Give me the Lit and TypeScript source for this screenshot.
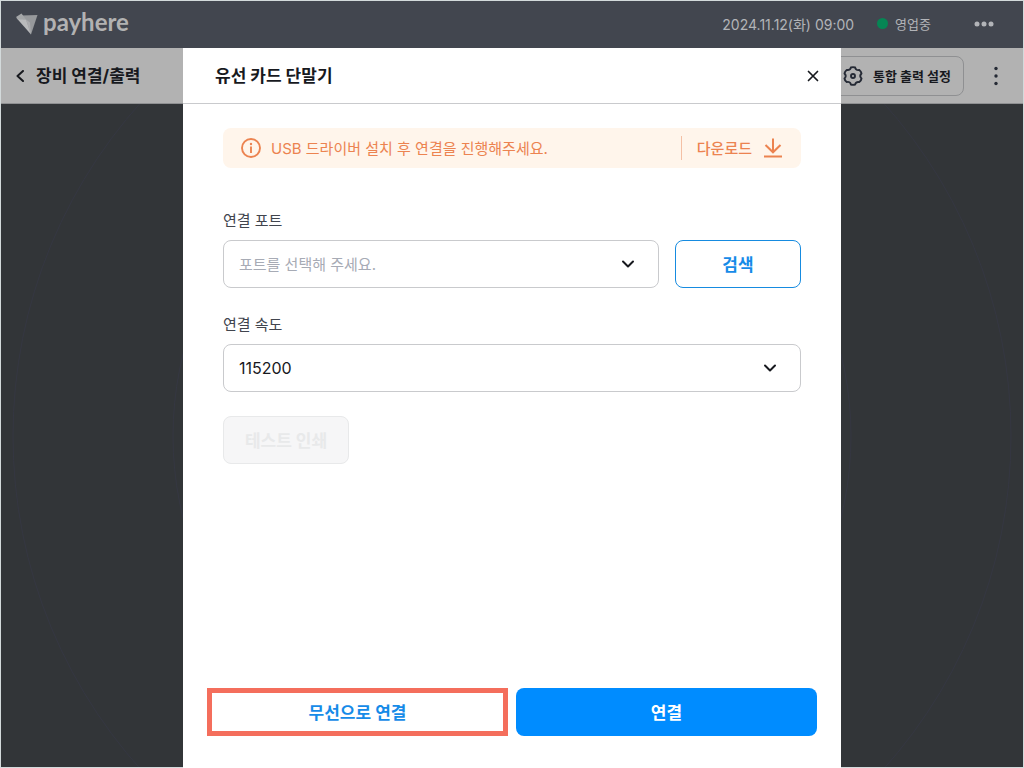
import { LitElement, html, css, svg } from "lit";
import { customElement, state } from "lit/decorators.js";

const chevronDown = svg`<path d="M2 2.5 L7 7.5 L12 2.5" fill="none" stroke="#17191e" stroke-width="2" stroke-linecap="round" stroke-linejoin="round"/>`;

@customElement("select-box")
class SelectBox extends LitElement {
  static properties = {
    label: {},
    placeholder: {},
    options: { attribute: false },
  };
  declare label: string;
  declare placeholder: string;
  declare options: string[];

  constructor() {
    super();
    this.label = "";
    this.placeholder = "";
    this.options = [];
  }

  static styles = css`
    :host {
      display: block;
      flex: 1;
      min-width: 0;
    }
    .label {
      display: block;
      font-size: 15px;
      line-height: 26px;
      margin-bottom: 6px;
      color: #41454e;
    }
    .field {
      display: grid;
      align-items: center;
    }
    .control {
      grid-area: 1 / 1;
      appearance: none;
      box-sizing: border-box;
      width: 100%;
      height: 48px;
      padding: 0 48px 0 15px;
      border: 1px solid #c9cacd;
      border-radius: 8px;
      background: #fff;
      color: #17191e;
      font-family: inherit;
      font-size: 16px;
    }
    .control.empty {
      color: #a7abb5;
      font-size: 15px;
    }
    .chevron {
      grid-area: 1 / 1;
      justify-self: end;
      margin-right: 24px;
      pointer-events: none;
    }
  `;

  render() {
    return html`
      <label class="label" for="control">${this.label}</label>
      <div class="field">
        <select id="control" class="control ${this.placeholder ? "empty" : ""}">
          ${this.placeholder ? html`<option value="">${this.placeholder}</option>` : ""}
          ${this.options.map((o) => html`<option>${o}</option>`)}
        </select>
        <svg class="chevron" width="14" height="10" viewBox="0 0 14 10" aria-hidden="true">${chevronDown}</svg>
      </div>
    `;
  }
}

@customElement("app-root")
class AppRoot extends LitElement {
  @state() speeds = ["115200", "57600", "38400", "19200", "9600"];

  static styles = css`
    :host {
      display: block;
      font-family: "Inter", "Noto Sans CJK KR", sans-serif;
      color: #17191e;
    }
    button {
      font-family: inherit;
      margin: 0;
      padding: 0;
      border: 0;
      background: none;
      color: inherit;
      cursor: pointer;
    }
    svg {
      display: block;
    }
    .page {
      box-sizing: border-box;
      min-height: 100vh;
      display: flex;
      flex-direction: column;
      border: 1px solid #d3dadb;
      background: #323538;
    }
    .topbar {
      box-sizing: border-box;
      display: flex;
      align-items: center;
      height: 47px;
      padding: 0 29px 2px 15px;
      background: #42464f;
      color: #b2b4b8;
      font-size: 14px;
    }
    .brand {
      display: flex;
      align-items: center;
      gap: 5px;
      margin-right: auto;
    }
    .wordmark {
      font-family: "Lato", sans-serif;
      font-size: 24px;
      font-weight: 700;
      line-height: 40px;
      padding-bottom: 4px;
      color: #b2b2b2;
    }
    .status {
      display: flex;
      align-items: center;
      gap: 7px;
      margin: 0 43px 0 23px;
      font-size: 13px;
    }
    .dot {
      width: 11px;
      height: 11px;
      border-radius: 50%;
      background: #068554;
    }
    .subbar {
      box-sizing: border-box;
      display: flex;
      align-items: center;
      height: 56px;
      padding: 0 25px 0 15px;
      border-bottom: 1px solid #8f9092;
      background: #b2b2b2;
    }
    .back {
      display: flex;
      align-items: center;
      gap: 12px;
      margin-right: auto;
    }
    .heading {
      margin: 0;
      font-size: 17px;
      line-height: 24px;
      font-weight: 700;
    }
    .settings {
      box-sizing: border-box;
      display: flex;
      align-items: center;
      gap: 10px;
      height: 40px;
      padding: 0 12px 0 15px;
      margin-right: 30px;
      border: 1px solid #8f9092;
      border-radius: 8px;
      font-size: 13px;
      font-weight: 700;
    }
    .stage {
      flex: 1;
      display: grid;
      place-items: center;
      overflow: hidden;
    }
    .rings {
      width: 1000px;
      height: 1000px;
      margin: -200px 0;
    }
    .overlay {
      position: fixed;
      inset: 48px 0 0 0;
      display: flex;
      justify-content: center;
    }
    .dialog {
      box-sizing: border-box;
      width: 658px;
      max-width: 100%;
      display: flex;
      flex-direction: column;
      background: #fff;
    }
    .dialog-head {
      box-sizing: border-box;
      display: flex;
      align-items: center;
      justify-content: space-between;
      height: 56px;
      padding: 0 22px 0 32px;
      border-bottom: 1px solid #c9cacd;
    }
    .dialog-body {
      flex: 1;
      padding: 24px 40px;
    }
    .notice {
      display: flex;
      align-items: center;
      height: 40px;
      margin-bottom: 40px;
      padding: 0 19px 0 18px;
      border-radius: 8px;
      background: #fff5eb;
      color: #ec8350;
      font-size: 15px;
    }
    .notice-text {
      flex: 1;
      margin-left: 10px;
      padding-bottom: 2px;
    }
    .download {
      display: flex;
      align-items: center;
      gap: 12px;
      height: 24px;
      padding-left: 15px;
      border-left: 1px solid #f4c0a5;
      color: inherit;
      font-weight: 500;
      text-decoration: none;
    }
    .download-text {
      padding-bottom: 2px;
    }
    .row {
      display: flex;
      align-items: flex-end;
      gap: 16px;
      margin-bottom: 24px;
    }
    .btn {
      box-sizing: border-box;
      height: 48px;
      padding-bottom: 2px;
      border-radius: 8px;
      font-size: 17px;
      font-weight: 700;
    }
    .search {
      width: 126px;
      border: 1px solid #168be0;
      color: #168be8;
    }
    .test {
      width: 126px;
      border: 1px solid #e8e9ea;
      background: #f6f6f7;
      color: #e8e9ea;
      cursor: default;
    }
    .actions {
      display: grid;
      grid-template-columns: 1fr 1fr;
      gap: 8px;
      padding: 0 24px 32px;
    }
    .wireless {
      border: 5px solid #f46e5c;
      border-radius: 0;
      color: #168be8;
    }
    .connect {
      background: #008cff;
      color: #fff;
    }
  `;

  render() {
    return html`
      <div class="page">
        <header class="topbar">
          <div class="brand">
            <svg width="22" height="22" viewBox="0 0 22 22" aria-hidden="true">
              <path d="M5.500 2.500 L21.500 2 L15 21.500 Z" fill="#97999c" />
              <path d="M0.500 5 L10 6.500 L15 21.500 Z" fill="#b9babc" />
              <path d="M10 6.500 L14 9.500 L15 21.500 Z" fill="#aaabae" />
              <path d="M0 4 L5.500 0.500 L10 6.500 L2 6.500 Z" fill="#a4a6a8" />
            </svg>
            <span class="wordmark">payhere</span>
          </div>
          <time>2024.11.12(화) 09:00</time>
          <div class="status"><span class="dot"></span>영업중</div>
          <button aria-label="더보기">
            <svg width="20" height="6" viewBox="0 0 20 6" fill="#b2b4b8">
              <circle cx="3" cy="3" r="2.500" /><circle cx="10" cy="3" r="2.500" /><circle cx="17" cy="3" r="2.500" />
            </svg>
          </button>
        </header>

        <div class="subbar">
          <div class="back">
            <button aria-label="뒤로">
              <svg width="8" height="12" viewBox="0 0 8 12"><path d="M7 1 L1.500 6 L7 11" fill="none" stroke="#17191e" stroke-width="2" stroke-linecap="round" stroke-linejoin="round" /></svg>
            </button>
            <h1 class="heading">장비 연결/출력</h1>
          </div>
          <button class="settings">
            <svg width="20" height="20" viewBox="0 0 20 20" fill="none" stroke="#252a35" stroke-width="1.900" stroke-linejoin="round" aria-hidden="true">
              <path d="M7.900 1.500 Q10 0.700 12.100 1.500 Q13 4.800 16.300 3.900 Q18.200 5.300 18.500 7.500 Q16 10 18.500 12.500 Q18.200 14.700 16.300 16.100 Q13 15.200 12.100 18.500 Q10 19.300 7.900 18.500 Q7 15.200 3.700 16.100 Q1.800 14.700 1.500 12.500 Q4 10 1.500 7.500 Q1.800 5.300 3.700 3.900 Q7 4.800 7.900 1.500 Z" />
              <circle cx="10" cy="10" r="2" />
            </svg>
            통합 출력 설정
          </button>
          <button aria-label="메뉴">
            <svg width="4" height="20" viewBox="0 0 4 20" fill="#252a35">
              <circle cx="2" cy="2.500" r="1.700" /><circle cx="2" cy="10" r="1.700" /><circle cx="2" cy="17.500" r="1.700" />
            </svg>
          </button>
        </div>

        <main class="stage">
          <svg class="rings" viewBox="0 0 1000 1000" fill="none" stroke="#353742" aria-hidden="true">
            <circle cx="500" cy="500" r="499" /><circle cx="500" cy="500" r="339" />
          </svg>
        </main>
      </div>

      <div class="overlay">
        <section class="dialog" role="dialog" aria-labelledby="dialog-title">
          <div class="dialog-head">
            <h2 class="heading" id="dialog-title">유선 카드 단말기</h2>
            <button aria-label="닫기">
              <svg width="12" height="12" viewBox="0 0 12 12"><path d="M1.500 1.500 L10.500 10.500 M10.500 1.500 L1.500 10.500" stroke="#17191e" stroke-width="1.700" stroke-linecap="round" /></svg>
            </button>
          </div>
          <div class="dialog-body">
            <div class="notice">
              <svg width="20" height="20" viewBox="0 0 20 20" aria-hidden="true">
                <circle cx="10" cy="10" r="9" fill="none" stroke="#ec8350" stroke-width="1.900" />
                <circle cx="10" cy="6" r="1.200" fill="#ec8350" />
                <path d="M10 8.500 V15" stroke="#ec8350" stroke-width="1.900" />
              </svg>
              <span class="notice-text">USB 드라이버 설치 후 연결을 진행해주세요.</span>
              <a class="download" href="#">
                <span class="download-text">다운로드</span>
                <svg width="18" height="20" viewBox="0 0 18 20" fill="none" stroke="#ec8350" stroke-width="2" aria-hidden="true">
                  <path d="M9 0.500 V14 M1.500 7 L9 14.300 L16.500 7 M0 18.500 H18" />
                </svg>
              </a>
            </div>
            <div class="row">
              <select-box .label=${"연결 포트"} .placeholder=${"포트를 선택해 주세요."}></select-box>
              <button class="btn search">검색</button>
            </div>
            <div class="row">
              <select-box .label=${"연결 속도"} .options=${this.speeds}></select-box>
            </div>
            <button class="btn test" disabled>테스트 인쇄</button>
          </div>
          <div class="actions">
            <button class="btn wireless">무선으로 연결</button>
            <button class="btn connect">연결</button>
          </div>
        </section>
      </div>
    `;
  }
}
